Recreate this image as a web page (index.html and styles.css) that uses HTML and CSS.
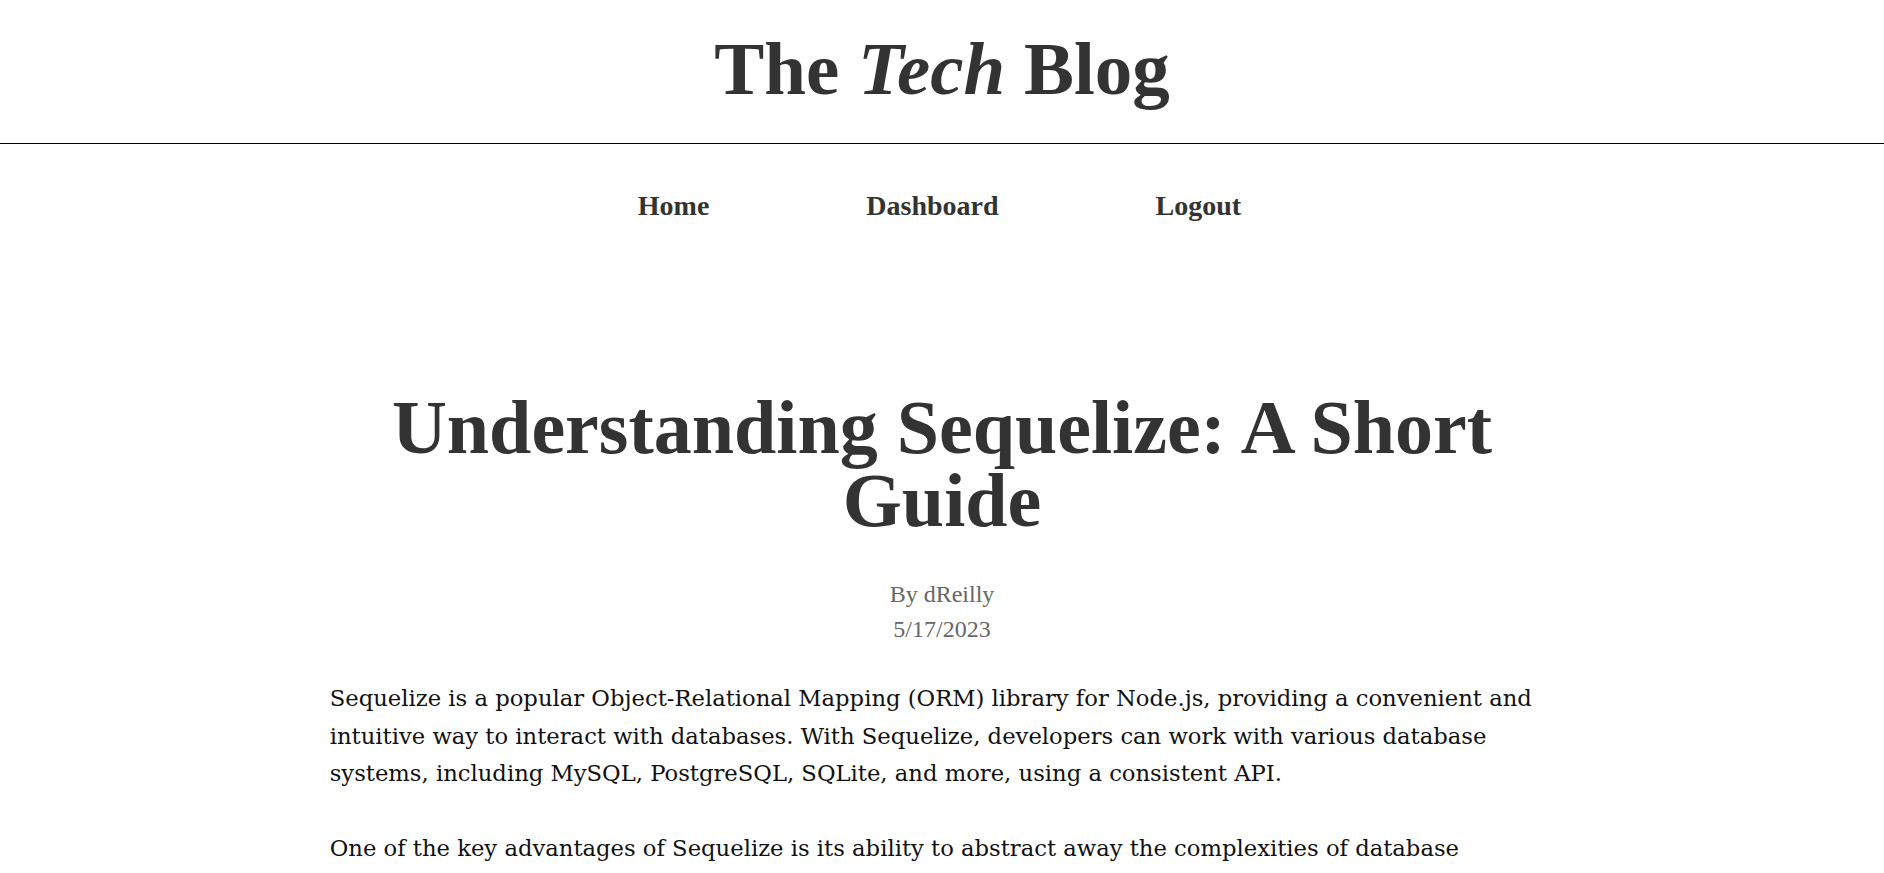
FILE: index.html
```html
<!DOCTYPE html>
<html lang="en">
<head>
<meta charset="utf-8">
<title>The Tech Blog</title>
<link rel="stylesheet" href="styles.css">
</head>
<body>
<header class="site-header">
  <h1 class="site-title">The <em>Tech</em> Blog</h1>
</header>
<nav class="site-nav">
  <a class="nav-link" href="#">Home</a>
  <a class="nav-link" href="#">Dashboard</a>
  <a class="nav-link" href="#">Logout</a>
</nav>
<main class="post">
  <h2 class="post-title">Understanding Sequelize: A Short Guide</h2>
  <div class="post-meta">
    <p class="post-author">By dReilly</p>
    <p class="post-date">5/17/2023</p>
  </div>
  <div class="post-body">
    <p>Sequelize is a popular Object-Relational Mapping (ORM) library for Node.js, providing a convenient and intuitive way to interact with databases. With Sequelize, developers can work with various database systems, including MySQL, PostgreSQL, SQLite, and more, using a consistent API.</p>
    <p>One of the key advantages of Sequelize is its ability to abstract away the complexities of database interactions. Developers can define models in JavaScript, describe the relationships between them, and let Sequelize generate and run the SQL queries behind the scenes.</p>
    <p>Sequelize also supports migrations, validations, hooks and transactions, making it a solid choice for building reliable, maintainable back ends.</p>
  </div>
</main>
</body>
</html>
```

FILE: styles.css
```css
html, body {
  margin: 0;
  padding: 0;
  background: #ffffff;
}

body {
  font-family: "Liberation Serif", "Times New Roman", serif;
  color: #333333;
}

.site-header {
  padding: 32px 0 38px;
  border-bottom: 1px solid #000000;
  text-align: center;
}

.site-title {
  margin: 0;
  font-size: 75px;
  line-height: 73px;
  font-weight: 700;
  color: #333333;
}

.site-title em {
  font-style: italic;
}

.site-nav {
  display: flex;
  justify-content: center;
  gap: 157px;
  margin-top: 48px;
  padding-right: 5px;
}

.nav-link {
  font-size: 28px;
  line-height: 28px;
  font-weight: 700;
  color: #333333;
  text-decoration: none;
}

.post {
  width: 65%;
  margin: 171px auto 0;
}

.post-title {
  margin: 0;
  text-align: center;
  font-size: 76px;
  line-height: 73px;
  font-weight: 700;
  color: #333333;
}

.post-meta {
  margin-top: 40px;
  text-align: center;
  color: #666666;
  font-size: 24px;
  line-height: 35px;
}

.post-meta p {
  margin: 0;
}

.post-body {
  margin-top: 33px;
  font-family: "DejaVu Serif", "Liberation Serif", serif;
  font-size: 22.7px;
  line-height: 37.5px;
  color: #111111;
}

.post-body p {
  margin: 0 0 37.5px;
}
```
